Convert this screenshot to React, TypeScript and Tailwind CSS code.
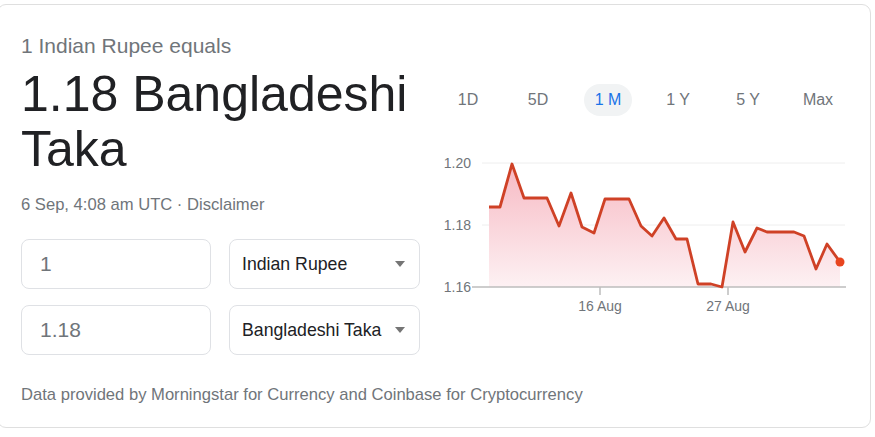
import React from "react";

const points: [number, number][] = [
  [490, 207], [501, 207], [513, 164], [525, 198], [548, 198], [560, 226],
  [572, 193], [583, 227], [595, 233], [606, 199], [630, 199], [642, 226],
  [653, 236], [665, 218], [677, 239], [688, 239], [699, 284], [712, 284],
  [723, 287], [734, 222], [746, 252], [758, 228], [768, 232], [795, 232],
  [805, 236], [817, 269], [828, 244], [841, 262],
];

// Chart is drawn in page coordinates shifted by the svg's origin
const OX = 436;
const OY = 140;

function RateChart() {
  const pts = points.map(([x, y]) => [x - OX, y - OY] as [number, number]);
  const line = pts.map(([x, y], i) => `${i ? "L" : "M"}${x} ${y}`).join(" ");
  const base = 287 - OY;
  const area = `${line} L${pts[pts.length - 1][0]} ${base} L${pts[0][0]} ${base} Z`;
  const last = pts[pts.length - 1];
  return (
    <svg width={430} height={185} className="block" style={{ fontFamily: '"Liberation Sans", Arial, sans-serif' }}>
      <defs>
        <linearGradient id="fillGrad" x1="0" y1="0" x2="0" y2="1">
          <stop offset="0%" stopColor="#f7b9c3" />
          <stop offset="100%" stopColor="#fdf1f3" />
        </linearGradient>
      </defs>
      <line x1={483 - OX} x2={846 - OX} y1={163 - OY} y2={163 - OY} stroke="#eeeeee" strokeWidth={1} />
      <line x1={483 - OX} x2={846 - OX} y1={225 - OY} y2={225 - OY} stroke="#eeeeee" strokeWidth={1} />
      <text x={472 - OX} y={168 - OY} textAnchor="end" fontSize={14} fill="#70757a">1.20</text>
      <text x={472 - OX} y={230 - OY} textAnchor="end" fontSize={14} fill="#70757a">1.18</text>
      <text x={472 - OX} y={292 - OY} textAnchor="end" fontSize={14} fill="#70757a">1.16</text>
      <path d={area} fill="url(#fillGrad)" />
      <line x1={473 - OX} x2={847 - OX} y1={base} y2={base} stroke="#bdbdbd" strokeWidth={1.5} />
      <line x1={601 - OX} x2={601 - OX} y1={base} y2={base + 8} stroke="#bdbdbd" strokeWidth={1.5} />
      <line x1={729 - OX} x2={729 - OX} y1={base} y2={base + 8} stroke="#bdbdbd" strokeWidth={1.5} />
      <text x={601 - OX} y={311 - OY} textAnchor="middle" fontSize={14} fill="#70757a">16 Aug</text>
      <text x={729 - OX} y={311 - OY} textAnchor="middle" fontSize={14} fill="#70757a">27 Aug</text>
      <path d={line} fill="none" stroke="#cf4126" strokeWidth={2.8} strokeLinejoin="round" />
      <circle cx={last[0]} cy={last[1]} r={4.5} fill="#e8451f" />
    </svg>
  );
}

function Caret() {
  return <span className="ml-auto h-0 w-0 border-x-[5.5px] border-t-[6px] border-x-transparent border-t-[#757575]" />;
}

export default function App() {
  const tabs = ["1D", "5D", "1 M", "1 Y", "5 Y", "Max"];
  return (
    <div className="h-[437px] w-[875px] overflow-hidden bg-white pt-[4px] pl-0" style={{ fontFamily: '"Liberation Sans", Arial, sans-serif' }}>
      <div className="ml-[-3px] h-[424px] w-[874px] rounded-[9px] border border-[#dfdfdf] bg-white">
        <div className="flex">
          <div className="w-[439px] pl-[23px] pt-[29px]">
            <div className="text-[21px] leading-[24px] text-[#70757a]">1 Indian Rupee equals</div>
            <div className="mt-[9px] text-[50px] leading-[55px] text-[#202124]">1.18 Bangladeshi Taka</div>
            <div className="mt-[18px] text-[16.6px] leading-[20px] text-[#70757a]">6 Sep, 4:08 am UTC · Disclaimer</div>
            <div className="mt-[24px] flex flex-col gap-[16px]">
              <div className="flex gap-[18px]">
                <div className="flex h-[50px] w-[190px] items-center rounded-[8px] border border-[#dfe1e5] pl-[18px] text-[21px] text-[#70757a]">1</div>
                <div className="flex h-[50px] w-[191px] items-center rounded-[8px] border border-[#dfe1e5] pl-[12px] pr-[14px] text-[17.7px] text-[#202124]">
                  Indian Rupee
                  <Caret />
                </div>
              </div>
              <div className="flex gap-[18px]">
                <div className="flex h-[50px] w-[190px] items-center rounded-[8px] border border-[#dfe1e5] pl-[18px] text-[21px] text-[#70757a]">1.18</div>
                <div className="flex h-[50px] w-[191px] items-center rounded-[8px] border border-[#dfe1e5] pl-[12px] pr-[14px] text-[17.7px] text-[#202124]">
                  Bangladeshi Taka
                  <Caret />
                </div>
              </div>
            </div>
          </div>
          <div className="flex-1">
            <div className="ml-[-4px] mt-[79px] flex">
              {tabs.map((t) => (
                <div key={t} className="flex w-[70px] justify-center">
                  <span
                    className={
                      t === "1 M"
                        ? "flex h-[32px] items-center rounded-full bg-[#f1f3f4] px-[11px] text-[16px] text-[#1a73e8]"
                        : "flex h-[32px] items-center px-[11px] text-[16px] text-[#70757a]"
                    }
                  >
                    {t}
                  </span>
                </div>
              ))}
            </div>
            <div className="mt-[24px] ml-[-2px]">
              <RateChart />
            </div>
          </div>
        </div>
        <div className="mt-[30px] pl-[23px] text-[16.6px] leading-[20px] text-[#70757a]">
          Data provided by Morningstar for Currency and Coinbase for Cryptocurrency
        </div>
      </div>
    </div>
  );
}
